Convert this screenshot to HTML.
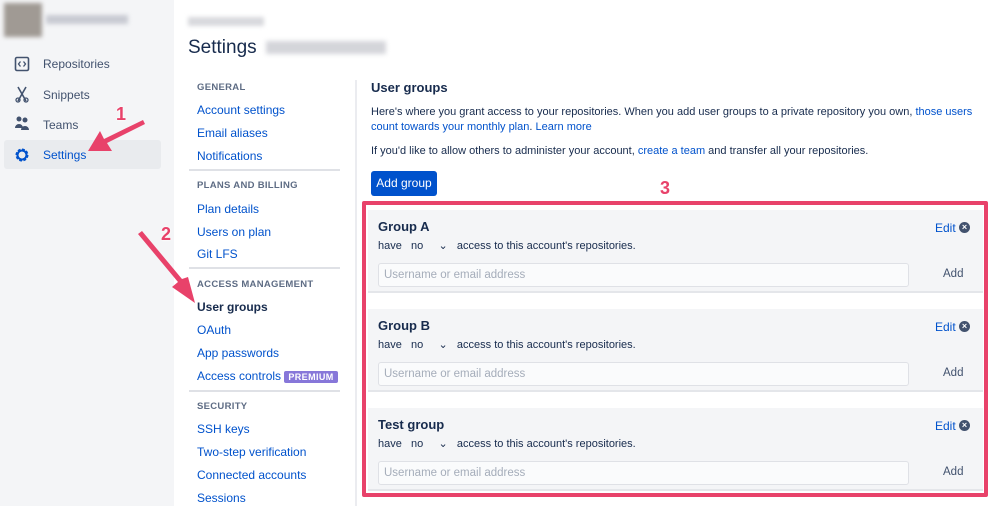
<!DOCTYPE html>
<html><head><meta charset="utf-8"><style>
*{margin:0;padding:0;box-sizing:border-box}
body{width:998px;height:506px;overflow:hidden;background:#fff;font-family:"Liberation Sans",Arial,sans-serif;color:#172b4d;position:relative;font-size:12px}
.a{position:absolute;white-space:nowrap}
.side{position:absolute;left:0;top:0;width:174px;height:506px;background:#f4f5f7}
.nav{position:absolute;left:43px;font-size:12px;color:#42526e}
.h{position:absolute;left:197px;font-size:9.5px;font-weight:bold;color:#5e6c84;letter-spacing:.3px}
.l{position:absolute;left:197px;font-size:12px;color:#0052cc}
.dv{position:absolute;left:189px;width:151px;height:2px;background:#dfe1e6}
.card{position:absolute;left:368px;width:615px;height:83px;background:#f4f5f7;border-bottom:2px solid #e4e6ea}
.card .t{position:absolute;left:10px;top:9px;font-size:13px;font-weight:bold}
.card .hv{position:absolute;left:10px;top:29px;font-size:11px}
.card .in{position:absolute;left:10px;top:53px;width:531px;height:24px;background:#fafbfc;border:1px solid #dfe1e6;border-radius:3px;font-size:11.5px;color:#a5adba;padding:0 5px;line-height:22px}
.card .ad{position:absolute;left:575px;top:58px;font-size:11.5px;color:#42526e}
.card .ed{position:absolute;left:567px;top:11px;font-size:12px;color:#0052cc}
.card .x{position:absolute;left:591px;top:12px;width:11px;height:11px;border-radius:50%;background:#42526e;color:#fff;font-size:9px;line-height:11px;text-align:center;font-weight:bold}
.num{position:absolute;font-size:18px;font-weight:bold;color:#e8426a;text-shadow:0 0 2px #fff,0 0 2px #fff}
</style></head><body>
<div class="side"></div>
<div class="a" style="left:4px;top:3px;width:38px;height:34px;background:#a09a94;filter:blur(2px)"></div>
<div class="a" style="left:46px;top:15px;width:82px;height:9px;background:#c8cad2;filter:blur(2px)"></div>
<div class="a" style="left:4px;top:140px;width:157px;height:29px;background:#e9ebee;border-radius:3px"></div>
<svg class="a" style="left:14px;top:56px" width="16" height="120" viewBox="0 0 16 120">
<rect x="1.5" y="1.5" width="13" height="13" rx="1.5" fill="none" stroke="#42526e" stroke-width="1.6"/><path d="M6.5 5.5L4.5 8l2 2.5M9.5 5.5l2 2.5-2 2.5" fill="none" stroke="#42526e" stroke-width="1.3"/>
<path d="M4 31l8 14M12 31l-8 14" stroke="#42526e" stroke-width="1.6"/><circle cx="4" cy="44" r="2" fill="none" stroke="#42526e" stroke-width="1.3"/><circle cx="12" cy="44" r="2" fill="none" stroke="#42526e" stroke-width="1.3"/>
<circle cx="5" cy="63" r="2.5" fill="#42526e"/><circle cx="11" cy="64" r="2.5" fill="#42526e"/><path d="M1 72a4 4 0 0 1 8 0zM7 74a4 4 0 0 1 8 0z" fill="#42526e"/>
<circle cx="8" cy="99" r="5" fill="none" stroke="#0052cc" stroke-width="3" stroke-dasharray="2.5 1.4"/><circle cx="8" cy="99" r="4.5" fill="none" stroke="#0052cc" stroke-width="2"/>
</svg>
<div class="nav" style="top:57px">Repositories</div>
<div class="nav" style="top:88px">Snippets</div>
<div class="nav" style="top:118px">Teams</div>
<div class="nav" style="top:148px;color:#0052cc">Settings</div>
<div class="a" style="left:188px;top:17px;width:76px;height:9px;background:#d8d9dd;filter:blur(2px)"></div>
<div class="a" style="left:188px;top:37px;font-size:19px;color:#172b4d">Settings</div>
<div class="a" style="left:266px;top:41px;width:120px;height:13px;background:#d4d5da;filter:blur(2.5px)"></div>
<div class="h" style="top:82px">GENERAL</div>
<div class="l" style="top:103px">Account settings</div>
<div class="l" style="top:126px">Email aliases</div>
<div class="l" style="top:149px">Notifications</div>
<div class="dv" style="top:169px"></div>
<div class="h" style="top:180px">PLANS AND BILLING</div>
<div class="l" style="top:202px">Plan details</div>
<div class="l" style="top:225px">Users on plan</div>
<div class="l" style="top:247px">Git LFS</div>
<div class="dv" style="top:267px"></div>
<div class="h" style="top:279px">ACCESS MANAGEMENT</div>
<div class="l" style="top:300px;color:#172b4d;font-weight:bold">User groups</div>
<div class="l" style="top:323px">OAuth</div>
<div class="l" style="top:346px">App passwords</div>
<div class="l" style="top:369px">Access controls <span style="background:#8777d9;color:#fff;font-size:9px;font-weight:bold;padding:1px 4px;border-radius:2px;letter-spacing:.4px">PREMIUM</span></div>
<div class="dv" style="top:390px"></div>
<div class="h" style="top:401px">SECURITY</div>
<div class="l" style="top:422px">SSH keys</div>
<div class="l" style="top:445px">Two-step verification</div>
<div class="l" style="top:468px">Connected accounts</div>
<div class="l" style="top:491px">Sessions</div>
<div class="a" style="left:355px;top:80px;width:2px;height:426px;background:#ebecf0"></div>
<div class="a" style="left:371px;top:80px;font-size:13px;font-weight:bold">User groups</div>
<div class="a" style="left:371px;top:105px;font-size:11px;line-height:15px">Here's where you grant access to your repositories. When you add user groups to a private repository you own, <span style="color:#0052cc">those users</span><br><span style="color:#0052cc">count towards your monthly plan</span>. <span style="color:#0052cc">Learn more</span></div>
<div class="a" style="left:371px;top:145px;font-size:11px">If you'd like to allow others to administer your account, <span style="color:#0052cc">create a team</span> and transfer all your repositories.</div>
<div class="a" style="left:371px;top:171px;width:66px;height:25px;background:#0052cc;border-radius:3px;color:#fff;font-size:12px;text-align:center;line-height:25px">Add group</div>
<div class="num" style="left:660px;top:178px">3</div>
<div class="card" style="top:210px"><div class="t">Group A</div><div class="hv">have &nbsp;&nbsp;no &nbsp;&nbsp;&nbsp;&nbsp;⌄ &nbsp;&nbsp;access to this account's repositories.</div><div class="in">Username or email address</div><div class="ad">Add</div><div class="ed">Edit</div><div class="x">×</div></div>
<div class="card" style="top:309px"><div class="t">Group B</div><div class="hv">have &nbsp;&nbsp;no &nbsp;&nbsp;&nbsp;&nbsp;⌄ &nbsp;&nbsp;access to this account's repositories.</div><div class="in">Username or email address</div><div class="ad">Add</div><div class="ed">Edit</div><div class="x">×</div></div>
<div class="card" style="top:408px"><div class="t">Test group</div><div class="hv">have &nbsp;&nbsp;no &nbsp;&nbsp;&nbsp;&nbsp;⌄ &nbsp;&nbsp;access to this account's repositories.</div><div class="in">Username or email address</div><div class="ad">Add</div><div class="ed">Edit</div><div class="x">×</div></div>
<div class="a" style="left:362px;top:201px;width:626px;height:296px;border:4px solid #e8426a;border-radius:2px"></div>
<svg class="a" style="left:0;top:0" width="360" height="330">
<path d="M143 120L104 139L100 131L88 151L112 151L107 143L145 124Z" fill="#e8426a"/>
<path d="M138 234L178 282L172 287L195 303L188 277L182 279L142 231Z" fill="#e8426a"/>
</svg>
<div class="num" style="left:116px;top:104px">1</div>
<div class="num" style="left:161px;top:224px">2</div>
</body></html>
